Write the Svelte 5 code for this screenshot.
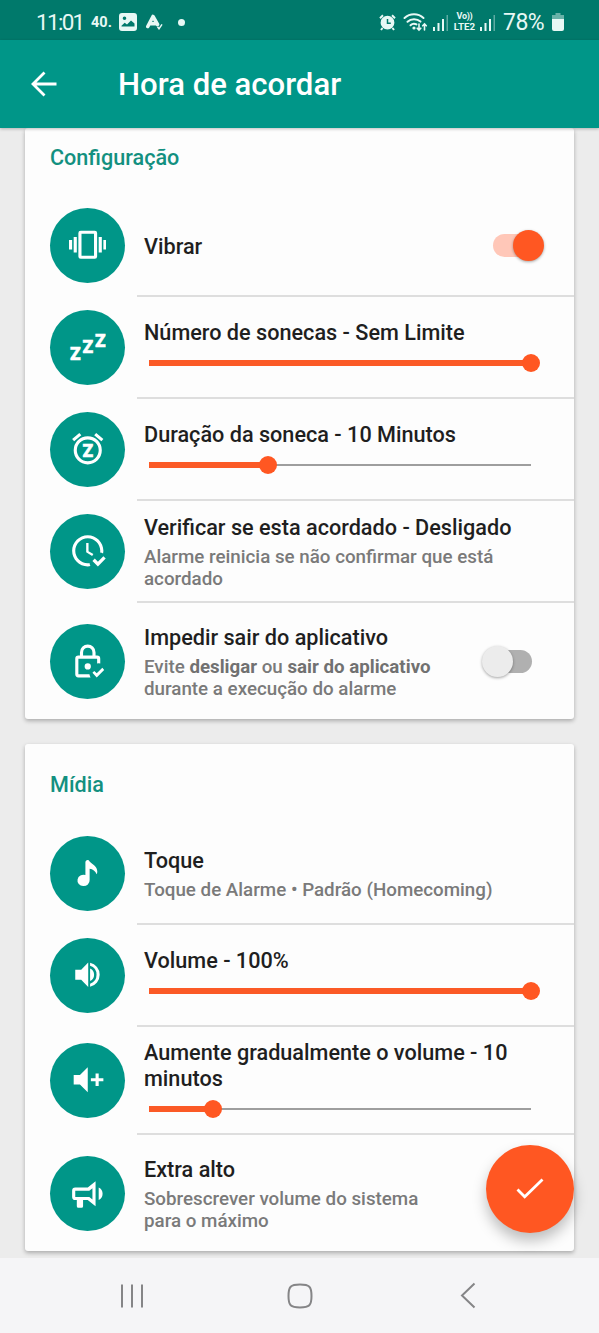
<script>
  let settings = [
    {
      title: 'Configuração',
      rows: [
        { icon: 'vibrate', title: 'Vibrar', checked: true },
        { icon: 'sleep', title: 'Número de sonecas - Sem Limite', value: 100 },
        { icon: 'snooze', title: 'Duração da soneca - 10 Minutos', value: 31.1 },
        {
          icon: 'clock',
          title: 'Verificar se esta acordado - Desligado',
          text: [{ t: 'Alarme reinicia se não confirmar que está acordado' }]
        },
        {
          icon: 'lock',
          title: 'Impedir sair do aplicativo',
          text: [
            { t: 'Evite ' },
            { t: 'desligar', bold: true },
            { t: ' ou ' },
            { t: 'sair do aplicativo', bold: true },
            { t: ' durante a execução do alarme' }
          ],
          checked: false
        }
      ]
    },
    {
      title: 'Mídia',
      rows: [
        { icon: 'music', title: 'Toque', text: [{ t: 'Toque de Alarme • Padrão (Homecoming)' }] },
        { icon: 'volume', title: 'Volume - 100%', value: 100 },
        { icon: 'volumePlus', title: 'Aumente gradualmente o volume - 10 minutos', value: 16.8, tall: true },
        {
          icon: 'bullhorn',
          title: 'Extra alto',
          text: [{ t: 'Sobrescrever volume do sistema para o máximo' }],
          narrow: true
        }
      ]
    }
  ];

  const icons = {
    vibrate: 'M0 15h2V9H0v6m3 2h2V7H3v10m16 0V7h2v10h-2m3-8v6h2V9h-2m-6 10H8V5h8v14m.5-16h-9A1.5 1.5 0 0 0 6 4.500v15A1.5 1.5 0 0 0 7.500 21h9a1.500 1.500 0 0 0 1.500-1.500v-15A1.500 1.500 0 0 0 16.500 3z',
    sleep: '',
    snooze: 'M7.880 3.390 6.600 1.860 2 5.710l1.290 1.530 4.590-3.850M22 5.720l-4.600-3.860-1.290 1.530 4.600 3.860L22 5.720M12 4a9 9 0 1 0 0 18 9 9 0 0 0 0-18m0 16a7 7 0 1 1 0-14 7 7 0 0 1 0 14z',
    clock: 'M23.500 17l-5 5-3.500-3.500 1.500-1.500 2 2 3.500-3.500 1.500 1.500M13.100 19.900c-.4.1-.7.1-1.100.1-4.400 0-8-3.600-8-8s3.600-8 8-8 8 3.600 8 8c0 .4 0 .7-.1 1.100.7.100 1.300.3 1.900.6.1-.6.2-1.100.2-1.700 0-5.500-4.500-10-10-10S2 6.500 2 12s4.500 10 10 10c.6 0 1.200-.1 1.700-.2-.3-.5-.5-1.200-.6-1.900M11 7v6l3.800 2.300.8-1.200-3.100-1.800V7z',
    lock: 'M14 15a2 2 0 1 1-4 0 2 2 0 0 1 4 0m-.91 5c.12.72.37 1.390.72 2H6a2 2 0 0 1-2-2V10a2 2 0 0 1 2-2h1V6a5 5 0 0 1 10 0v2h1a2 2 0 0 1 2 2v3.090a5.500 5.500 0 0 0-2 0V10H6v10h7.090M9 8h6V6a3 3 0 0 0-6 0v2m12.340 7.840-3.590 3.590-1.590-1.590L15 19l2.750 3 4.750-4.750-1.160-1.410z',
    music: 'M10.500 13.500V5.300c0-.9.6-1.500 1.400-1.500.7 0 1 .4 1.300 1 1.600 2 4.900 2.900 4.900 6.400 0 .7-.1 1.300-.4 1.800-.9-2-2.400-3.200-4.500-3.500v7.200a3.900 3.600 0 1 1-2.700-3.200z',
    volume: 'M4 8.800v6.400h3.800l4.500 4.600V4.200L7.800 8.800H4M13.500 8v8a4.400 4.400 0 0 0 0-8m0-3.700v2a6 6 0 0 1 0 11.400v2a7.900 7.900 0 0 0 0-15.400z',
    volumePlus: 'M3 9h4l5-5v16l-5-5H3V9m11 2h3V8h2v3h3v2h-3v3h-2v-3h-3v-2z',
    bullhorn: 'M12 8H4a2 2 0 0 0-2 2v4a2 2 0 0 0 2 2h1v4a1 1 0 0 0 1 1h2a1 1 0 0 0 1-1v-4h3l5 4V4l-5 4m3 7.600L13 14H4v-4h9l2-1.600v7.200m6.500-3.600a4.500 4.500 0 0 1-2.500 4V8a4.500 4.500 0 0 1 2.500 4z'
  };
</script>

<div class="screen">
  <div class="status">
    <span class="time">11:01</span>
    <span class="temp">40.</span>
    <svg class="picture" width="18" height="18" viewBox="0 0 18 18">
      <path fill-rule="evenodd" d="M3 0h12a3 3 0 0 1 3 3v12a3 3 0 0 1-3 3H3a3 3 0 0 1-3-3V3a3 3 0 0 1 3-3zM2.500 13.500h13v-3l-3.500-3-4 4-2.300-1.700-3.200 3zM5.500 3.500a1.800 1.800 0 1 0 0 3.600 1.800 1.800 0 0 0 0-3.600z" />
    </svg>
    <svg class="appmark" width="17" height="16" viewBox="0 0 17 16">
      <path d="M1.800 12.500 7 2.500 11.500 10.500M4 9.500 11 9.800" fill="none" stroke="#e8f8f5" stroke-width="3.600" stroke-linecap="round" stroke-linejoin="round" />
      <path d="m11.500 12.800 1.500 2 3-4.500" fill="none" stroke="#e8f8f5" stroke-width="1.500" />
    </svg>
    <span class="dot"></span>
    <div class="status-right">
      <svg width="17" height="17" viewBox="0 0 17 17">
        <circle cx="8.500" cy="8.700" r="6.900" />
        <path d="M1 4.200 4 1.300M16 4.200l-3-2.900M3.500 14 2 16M13.500 14l1.500 2" stroke="#e8f8f5" stroke-width="2" />
        <path d="M8.500 5v4.200h3.300" fill="none" stroke="#00796b" stroke-width="1.500" />
      </svg>
      <svg class="wifi" width="26" height="20" viewBox="0 0 26 20">
        <g fill="none" stroke="#e8f8f5" stroke-width="2" stroke-linecap="round">
          <path d="M1.500 6a14 14 0 0 1 19 0M4.500 9.800a9.500 9.500 0 0 1 13-.2M7.500 13.200a5.200 5.200 0 0 1 6-.8" />
          <path d="M16 12v6m-1.800-1.800L16 18l1.800-1.800M21.500 18v-6m-1.800 1.800 1.800-1.800 1.800 1.800" stroke-width="1.600" />
        </g>
        <circle cx="11" cy="16" r="1.600" />
      </svg>
      <svg class="signal" width="16" height="17" viewBox="0 0 16 17">
        <path d="M0 13h2v4H0zM4.500 9h2v8h-2zM9 5h2v12H9z" /><path d="M13.500 1h1.500v16h-1.500z" opacity=".4" />
      </svg>
      <div class="lte"><span>Vo))</span><span>LTE2</span></div>
      <svg class="signal" width="16" height="17" viewBox="0 0 16 17">
        <path d="M0 13h2v4H0zM4.500 9h2v8h-2zM9 5h2v12H9z" /><path d="M13.500 1h1.500v16h-1.500z" opacity=".4" />
      </svg>
      <span class="percent">78%</span>
      <svg class="battery" width="12" height="18" viewBox="0 0 12 18">
        <path d="M3.500 0h5v2H12v5H0V2h3.500z" opacity=".45" />
        <path d="M0 6h12v10a2 2 0 0 1-2 2H2a2 2 0 0 1-2-2z" />
      </svg>
    </div>
  </div>

  <header>
    <svg width="26" height="26" viewBox="0 0 26 26">
      <path d="M13.500 1.500 2 13l11.500 11.500M2 13h23.500" fill="none" stroke="#fff" stroke-width="2.800" />
    </svg>
    <h1>Hora de acordar</h1>
  </header>

  <main>
    {#each settings as card, i}
      <section class="card" class:first={i === 0}>
        <h2>{card.title}</h2>
        {#each card.rows as row}
          <div class="row" class:tall={row.tall}>
            <div class="circle">
              <svg width="37.500" height="37.500" viewBox="0 0 24 24">
                <path d={icons[row.icon]} />
                {#if row.icon === 'sleep'}
                  <text x="0.600" y="20.200">Z</text>
                  <text x="8.600" y="16.200">Z</text>
                  <text x="16.600" y="12.200">Z</text>
                {:else if row.icon === 'snooze'}
                  <text x="8.600" y="17">Z</text>
                {/if}
              </svg>
            </div>
            <div class="content">
              <div class="info" class:narrow={row.narrow}>
                <h3>{row.title}</h3>
                {#if row.text}
                  <p>{#each row.text as part}{#if part.bold}<b>{part.t}</b>{:else}{part.t}{/if}{/each}</p>
                {/if}
                {#if row.value !== undefined}
                  <div class="slider">
                    <div class="fill" style="width: {row.value}%"></div>
                    <div class="knob"></div>
                    <div class="rest"></div>
                  </div>
                {/if}
              </div>
              {#if row.checked !== undefined}
                <div class="switch" class:on={row.checked}><span class="thumb"></span></div>
              {/if}
            </div>
          </div>
        {/each}
      </section>
    {/each}
  </main>

  <button class="fab" aria-label="Salvar">
    <svg width="28" height="22" viewBox="0 0 28 22">
      <path d="m1.500 11.500 7.200 7.200L26.500 1.500" fill="none" stroke="#fff" stroke-width="2.800" />
    </svg>
  </button>

  <nav>
    <svg width="24" height="26" viewBox="0 0 24 26">
      <path d="M2 1.500v23M12 1.500v23M22 1.500v23" />
    </svg>
    <svg class="home" width="26" height="26" viewBox="0 0 26 26">
      <path d="M13 1.500c9.500 0 11.500 2 11.500 11.500s-2 11.500-11.500 11.500S1.500 22.500 1.500 13 3.500 1.500 13 1.500z" />
    </svg>
    <svg width="16" height="27" viewBox="0 0 16 27">
      <path d="M14.500 1.500 2 13.500l12.500 12" />
    </svg>
  </nav>
</div>

<style>
  .screen {
    position: relative;
    display: flex;
    flex-direction: column;
    width: 599px;
    height: 1333px;
    overflow: hidden;
    background: #ececec;
    font-family: Roboto, sans-serif;
  }

  svg {
    display: block;
    flex: none;
  }

  h1, h2, h3, p {
    margin: 0;
    font-weight: 500;
  }

  .status {
    display: flex;
    align-items: center;
    height: 40px;
    padding: 4px 35px 0 36px;
    box-sizing: border-box;
    background: #00796b;
    color: #e8f8f5;
    fill: #e8f8f5;
    flex: none;
  }

  .time {
    width: 55px;
    font-size: 22.500px;
    letter-spacing: -1.700px;
  }

  .temp {
    width: 28px;
    font-size: 14.500px;
    font-weight: 700;
  }

  .appmark {
    margin-left: 9px;
  }

  .dot {
    width: 7px;
    height: 7px;
    margin-left: 15px;
    border-radius: 50%;
    background: #e8f8f5;
  }

  .status-right {
    display: flex;
    align-items: center;
    margin-left: auto;
  }

  .wifi {
    margin-left: 7px;
  }

  .signal {
    margin-left: 4px;
  }

  .lte {
    display: flex;
    flex-direction: column;
    align-items: center;
    width: 23px;
    margin-left: 4px;
    font-size: 9.800px;
    line-height: 11px;
    font-weight: 700;
  }

  .lte span:first-child {
    font-size: 9px;
    line-height: 9px;
    letter-spacing: -0.300px;
  }

  .percent {
    width: 45px;
    margin: 0 4px 0 7px;
    font-size: 23px;
    letter-spacing: -0.5px;
    white-space: nowrap;
  }

  header {
    display: flex;
    align-items: center;
    height: 88px;
    padding-left: 31px;
    box-sizing: border-box;
    background: #009688;
    color: #fff;
    box-shadow: 0 1px 3px rgba(0, 0, 0, 0.25);
    flex: none;
    z-index: 1;
  }

  h1 {
    margin-left: 61px;
    padding-top: 2px;
    font-size: 31.100px;
    line-height: 36px;
  }

  main {
    flex: 1;
    min-height: 0;
    padding: 0 25px;
    overflow: hidden;
  }

  .card {
    margin-bottom: 25.500px;
    border-radius: 3px;
    background: #fdfdfd;
    box-shadow: 0 2px 4px rgba(0, 0, 0, 0.28);
  }

  h2 {
    height: 79px;
    padding: 28px 25px 0;
    box-sizing: border-box;
    color: #139080;
    font-size: 21.600px;
    line-height: 26px;
  }

  .first h2 {
    height: 67px;
    padding-top: 17px;
  }

  .row {
    display: flex;
    align-items: center;
    height: 102px;
    padding-left: 25px;
  }

  .row.tall {
    height: 108px;
  }

  .row:last-child {
    height: 115.500px;
  }

  .circle {
    display: flex;
    align-items: center;
    justify-content: center;
    width: 75px;
    height: 75px;
    margin: 0 12px 2px 0;
    border-radius: 50%;
    background: #009688;
    fill: #fff;
    flex: none;
  }

  .row:last-child .circle {
    margin: 1px 12px 0 0;
  }

  .circle text {
    font-size: 11.200px;
    font-weight: 900;
    stroke: #fff;
    stroke-width: 0.250px;
  }

  .content {
    display: flex;
    align-items: center;
    flex: 1;
    height: 100%;
    padding-left: 7px;
    box-sizing: border-box;
    border-bottom: 2px solid #dedede;
  }

  .row:last-child .content {
    border-bottom: none;
  }

  .info {
    flex: 1;
    padding: 3px 42px 0 0;
  }

  .info.narrow {
    padding-right: 130px;
  }

  h3 {
    color: #1f1f1f;
    font-size: 21.650px;
    line-height: 25.600px;
  }

  p {
    margin-top: 5px;
    color: #7a7a7a;
    font-size: 18.770px;
    line-height: 22px;
  }

  b {
    color: #717171;
    font-size: 18.700px;
    font-weight: 700;
  }

  .slider {
    display: flex;
    align-items: center;
    height: 18px;
    margin: 8.500px 1px 5px 5px;
  }

  .fill {
    height: 6px;
    background: #fb5a26;
    flex: none;
  }

  .knob {
    width: 18px;
    height: 18px;
    margin: 0 -9px;
    border-radius: 50%;
    background: #ff5722;
    flex: none;
    z-index: 1;
  }

  .rest {
    flex: 1;
    height: 1.500px;
    background: #9e9e9e;
  }

  .switch {
    display: flex;
    align-items: center;
    width: 47px;
    height: 23px;
    margin: 1px 42px 0 0;
    border-radius: 12px;
    background: #b0b0b0;
    flex: none;
  }

  .thumb {
    width: 31px;
    height: 31px;
    margin-left: -3.500px;
    border-radius: 50%;
    background: #ececec;
    box-shadow: 0 1px 3px rgba(0, 0, 0, 0.35);
    flex: none;
  }

  .switch.on {
    justify-content: flex-end;
    margin-right: 34px;
    background: #ffc7b8;
  }

  .switch.on .thumb {
    margin: 0 -3.500px 0 0;
    background: #ff5722;
  }

  .fab {
    position: absolute;
    right: 25px;
    bottom: 100px;
    display: flex;
    align-items: center;
    justify-content: center;
    width: 88px;
    height: 88px;
    padding: 0;
    border: none;
    border-radius: 50%;
    background: #ff5722;
    box-shadow: 0 8px 14px rgba(0, 0, 0, 0.25);
  }

  nav {
    display: flex;
    align-items: center;
    justify-content: space-between;
    height: 75px;
    padding: 0 123px 0 120px;
    box-sizing: border-box;
    background: #f5f5f7;
    flex: none;
  }

  nav path {
    fill: none;
    stroke: #858587;
    stroke-width: 2;
  }

  .home {
    margin-right: 4px;
  }
</style>
